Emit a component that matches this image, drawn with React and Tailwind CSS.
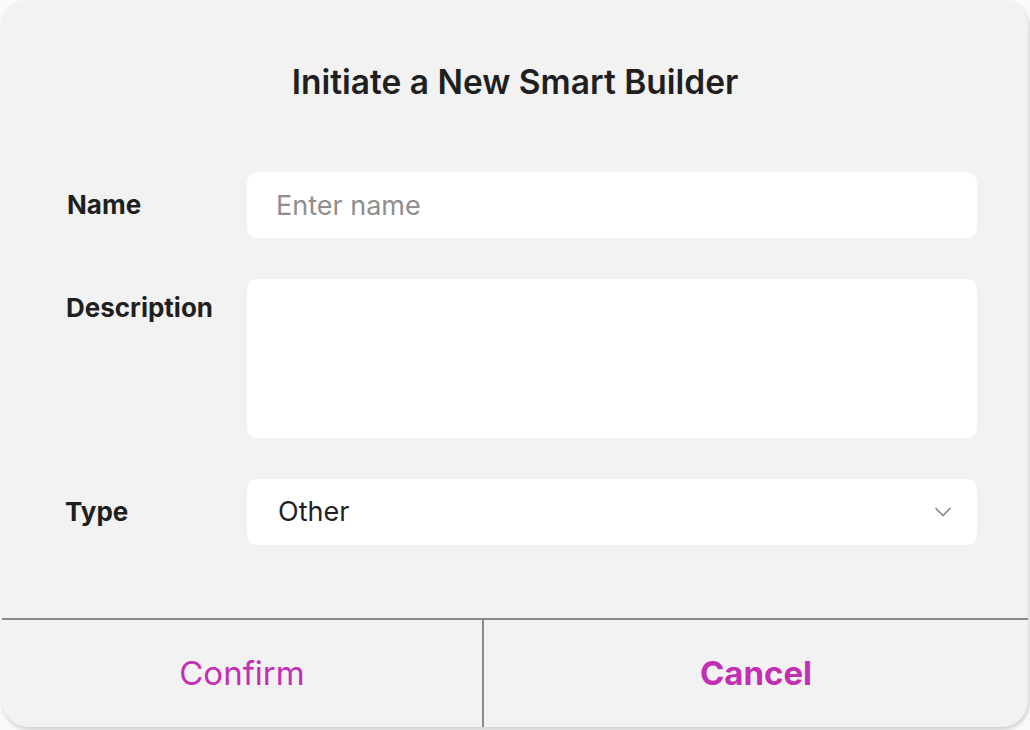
import React from "react";

export default function App() {
  return (
    <div className="w-[1030px] h-[730px] bg-[#fafafa] overflow-hidden" style={{ fontFamily: "Inter, 'Noto Sans', sans-serif" }}>
      <div className="ml-[2px] w-[1026px] h-[727px] rounded-[26px] bg-[#f2f2f2] shadow-[1px_2px_4px_rgba(0,0,0,0.2)] flex flex-col overflow-hidden">
        <div className="flex-1 flex flex-col">
          <h1 className="text-center text-[33.5px] font-semibold text-[#1f1f1f] mt-[62px] leading-[40px]">
            Initiate a New Smart Builder
          </h1>
          <div className="mt-[70px] flex flex-col gap-[41px]">
            <div className="flex items-center">
              <div className="w-[245px] pl-[65px] text-[26px] leading-[32px] font-bold text-[#1f1f1f]">Name</div>
              <input
                className="w-[730px] h-[66px] rounded-[10px] bg-white px-[29px] text-[27px] text-[#1f1f1f] placeholder:text-[#8e8e8e] outline-none"
                placeholder="Enter name"
              />
            </div>
            <div className="flex items-start">
              <div className="w-[245px] pl-[64px] pt-[13px] text-[26px] leading-[32px] font-bold text-[#1f1f1f]">Description</div>
              <textarea className="w-[730px] h-[159px] rounded-[10px] bg-white resize-none outline-none"></textarea>
            </div>
            <div className="flex items-center">
              <div className="w-[245px] pl-[63px] text-[26px] leading-[32px] font-bold text-[#1f1f1f]">Type</div>
              <div className="w-[730px] h-[66px] rounded-[10px] bg-white pl-[31px] pr-[25px] flex items-center justify-between">
                <span className="text-[27px] text-[#1f1f1f]">Other</span>
                <svg width="18" height="12" viewBox="0 0 18 12" fill="none">
                  <path d="M1.5 2 L9 9.5 L16.5 2" stroke="#8a8a8a" strokeWidth="1.6" />
                </svg>
              </div>
            </div>
          </div>
        </div>
        <div className="h-[109px] border-t-2 border-[#8a8a8a] flex">
          <button className="w-[482px] h-full border-r-2 border-[#8a8a8a] text-[33px] text-[#c22fb5]">Confirm</button>
          <button className="flex-1 h-full text-[33px] font-bold text-[#c22fb5]">Cancel</button>
        </div>
      </div>
    </div>
  );
}
